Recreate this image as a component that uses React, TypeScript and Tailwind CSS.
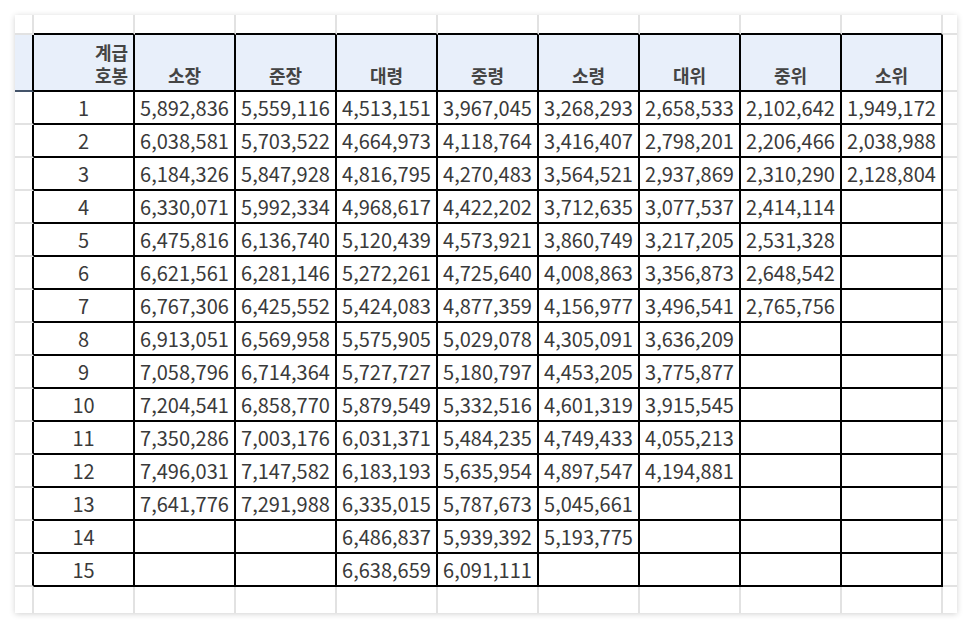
import React from "react";

const RANKS = ["소장", "준장", "대령", "중령", "소령", "대위", "중위", "소위"];

// 계급별 호봉 금액 (빈 칸은 해당 호봉 없음)
const PAY: string[][] = [
  ["5,892,836", "6,038,581", "6,184,326", "6,330,071", "6,475,816", "6,621,561", "6,767,306", "6,913,051", "7,058,796", "7,204,541", "7,350,286", "7,496,031", "7,641,776"],
  ["5,559,116", "5,703,522", "5,847,928", "5,992,334", "6,136,740", "6,281,146", "6,425,552", "6,569,958", "6,714,364", "6,858,770", "7,003,176", "7,147,582", "7,291,988"],
  ["4,513,151", "4,664,973", "4,816,795", "4,968,617", "5,120,439", "5,272,261", "5,424,083", "5,575,905", "5,727,727", "5,879,549", "6,031,371", "6,183,193", "6,335,015", "6,486,837", "6,638,659"],
  ["3,967,045", "4,118,764", "4,270,483", "4,422,202", "4,573,921", "4,725,640", "4,877,359", "5,029,078", "5,180,797", "5,332,516", "5,484,235", "5,635,954", "5,787,673", "5,939,392", "6,091,111"],
  ["3,268,293", "3,416,407", "3,564,521", "3,712,635", "3,860,749", "4,008,863", "4,156,977", "4,305,091", "4,453,205", "4,601,319", "4,749,433", "4,897,547", "5,045,661", "5,193,775"],
  ["2,658,533", "2,798,201", "2,937,869", "3,077,537", "3,217,205", "3,356,873", "3,496,541", "3,636,209", "3,775,877", "3,915,545", "4,055,213", "4,194,881"],
  ["2,102,642", "2,206,466", "2,310,290", "2,414,114", "2,531,328", "2,648,542", "2,765,756"],
  ["1,949,172", "2,038,988", "2,128,804"],
];

const STEPS = Array.from({ length: 15 }, (_, i) => i + 1);
const COLS = Array.from({ length: 9 }, (_, i) => i);

const grey = "border-[#e2e2e2]";

export default function App() {
  return (
    <div className="w-[972px] h-[628px] bg-white p-[15px]">
      <div
        className="w-[942px] h-[598px] bg-white shadow-[0_1px_6px_rgba(0,0,0,0.18)] overflow-hidden grid grid-cols-[19px_repeat(9,101px)_1fr] grid-rows-[20px_57px_repeat(15,33px)_1fr] text-[#3a3a3a]"
        style={{ fontFamily: '"Noto Sans CJK KR", "Noto Sans", sans-serif' }}
      >
        {/* top margin row */}
        <div className={`border-r-2 border-b-2 ${grey}`} />
        {COLS.map((c) => (
          <div key={"t" + c} className="border-r-2 border-b-2 border-r-[#e2e2e2] border-b-black" />
        ))}
        <div className={`border-b-2 ${grey}`} />

        {/* header row */}
        <div className="bg-[#e8effa] border-b-2 border-b-[#44546a] border-r-2 border-r-black" />
        <div className="bg-[#e8effa] border-r-2 border-b-2 border-black flex flex-col items-end justify-end pr-[5px] pb-[3px] text-[18px] leading-[23px] font-bold text-[#444]">
          <span>계급</span>
          <span>호봉</span>
        </div>
        {RANKS.map((r) => (
          <div
            key={r}
            className="bg-[#e8effa] border-r-2 border-b-2 border-black flex items-end justify-center pb-[3px] text-[18px] leading-[23px] font-bold text-[#444]"
          >
            {r}
          </div>
        ))}
        <div className={`border-b-2 ${grey}`} />

        {/* data rows */}
        {STEPS.map((s) => (
          <React.Fragment key={s}>
            <div className="border-r-2 border-b-2 border-r-black border-b-[#e2e2e2]" />
            <div className="border-r-2 border-b-2 border-black flex items-center justify-center text-[20px] leading-none">
              {s}
            </div>
            {PAY.map((col, i) => (
              <div
                key={i}
                className="border-r-2 border-b-2 border-black flex items-center justify-center text-[20px] leading-none"
              >
                {col[s - 1] ?? ""}
              </div>
            ))}
            <div className={`border-b-2 ${grey}`} />
          </React.Fragment>
        ))}

        {/* bottom margin row */}
        <div className={`border-r-2 ${grey}`} />
        {COLS.map((c) => (
          <div key={"b" + c} className={`border-r-2 ${grey}`} />
        ))}
        <div />
      </div>
    </div>
  );
}
